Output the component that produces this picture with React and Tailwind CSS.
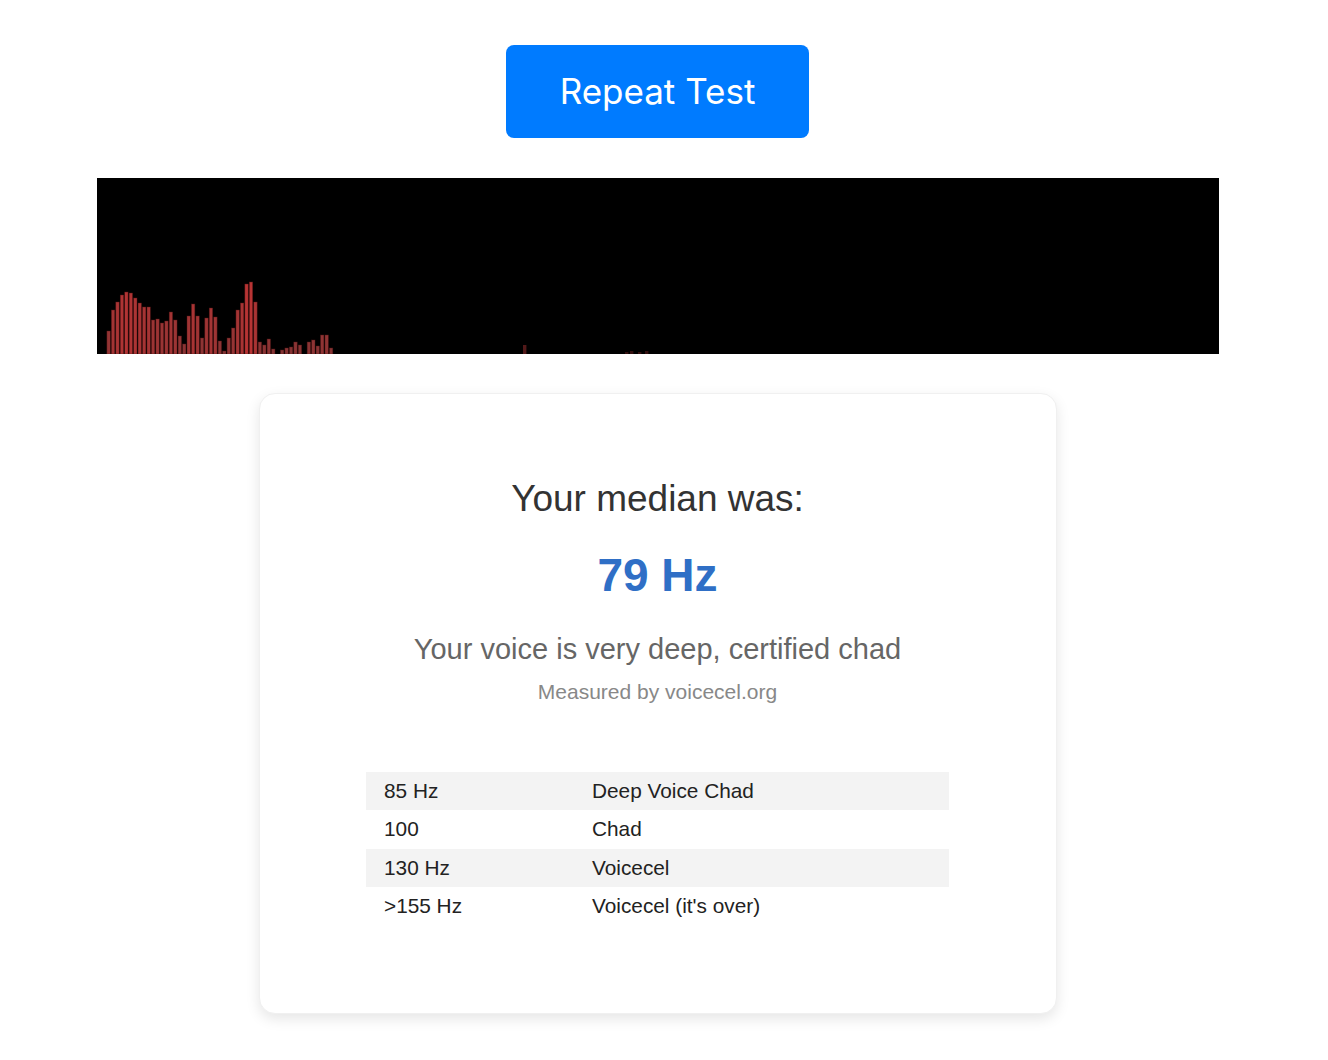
const bars = [
  0, 0, 23, 44, 52, 59, 62, 61, 56, 51, 47, 47, 34, 35, 31, 33, 42, 34, 18, 10,
  38, 50, 38, 16, 36, 46, 37, 13, 3, 16, 26, 44, 51, 70, 72, 52, 12, 9, 15, 5,
  0, 4, 6, 7, 12, 9, 0, 12, 14, 8, 19, 19, 6, 0,
];

const stray = [
  { x: 426, h: 9, o: 0.55 },
  { x: 528, h: 2, o: 0.35 },
  { x: 533, h: 3, o: 0.35 },
  { x: 541, h: 2, o: 0.35 },
  { x: 548, h: 3, o: 0.35 },
];

const ranges = [
  { hz: "85 Hz", label: "Deep Voice Chad" },
  { hz: "100", label: "Chad" },
  { hz: "130 Hz", label: "Voicecel" },
  { hz: ">155 Hz", label: "Voicecel (it's over)" },
];

function Spectrum() {
  const W = 1122;
  const H = 176;
  const slot = 4.45;
  return (
    <div className="h-[176px] w-[1122px] bg-black">
      <svg width={W} height={H} viewBox={`0 0 ${W} ${H}`} className="block">
        {bars.map((h, i) =>
          h > 0 ? (
            <rect
              key={i}
              x={1 + i * slot}
              y={H - h}
              width={3.4}
              height={h}
              fill={`rgb(${Math.round(130 + h * 0.75)}, 52, 52)`}
              stroke="rgba(80, 20, 20, 0.7)"
              strokeWidth={0.6}
            />
          ) : null
        )}
        {stray.map((b, i) => (
          <rect
            key={"s" + i}
            x={b.x}
            y={H - b.h}
            width={3.4}
            height={b.h}
            fill="rgb(150, 45, 45)"
            opacity={b.o}
          />
        ))}
      </svg>
    </div>
  );
}

export default function App() {
  return (
    <div className="min-h-screen bg-white">
      <div className="flex w-[1315px] flex-col items-center pt-[45px] pb-10">
        <button className="flex h-[93px] w-[303px] items-center justify-center rounded-lg bg-[#007bff] font-['Inter',sans-serif] text-[35px] leading-none text-white">
          Repeat Test
        </button>

        <div className="mt-10">
          <Spectrum />
        </div>

        <div className="mt-[39px] flex w-[798px] flex-col items-center rounded-2xl border border-[#f0f0f0] bg-white pt-[84px] pb-[88px] font-['Liberation_Sans',Arial,sans-serif] shadow-[0_5px_14px_rgba(0,0,0,0.1)]">
          <h2 className="text-[37px] leading-[1.15] text-[#333]">Your median was:</h2>
          <p className="mt-[28px] text-[46px] leading-[1.15] font-bold text-[#2f6fc6]">79 Hz</p>
          <p className="mt-[32px] text-[29px] leading-[1.15] text-[#666]">
            Your voice is very deep, certified chad
          </p>
          <p className="mt-[13px] text-[21px] leading-[1.15] text-[#888]">
            Measured by voicecel.org
          </p>

          <div className="mt-[68px] w-[583px] text-[20.8px] leading-[1.15] text-[#222]">
            {ranges.map((r, i) => (
              <div
                key={r.hz}
                className={
                  "grid h-[38.3px] grid-cols-[208px_1fr] items-center " +
                  (i % 2 === 0 ? "bg-[#f3f3f3]" : "bg-white")
                }
              >
                <span className="pl-[18px]">{r.hz}</span>
                <span className="pl-[18px]">{r.label}</span>
              </div>
            ))}
          </div>
        </div>
      </div>
    </div>
  );
}
